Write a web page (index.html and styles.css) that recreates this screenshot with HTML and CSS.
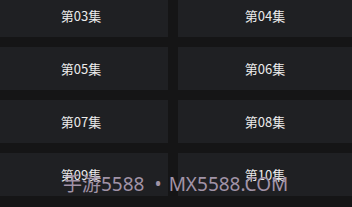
FILE: index.html
```html
<!DOCTYPE html>
<html lang="zh-CN">

<head>
    <meta charset="UTF-8">
    <meta name="viewport" content="width=device-width, initial-scale=1.0">
    <title>选集</title>
    <link rel="stylesheet" href="styles.css">
</head>

<body>
    <section class="episodes">
        <div class="episode">第03集</div>
        <div class="episode">第04集</div>
        <div class="episode">第05集</div>
        <div class="episode">第06集</div>
        <div class="episode">第07集</div>
        <div class="episode">第08集</div>
        <div class="episode">第09集</div>
        <div class="episode">第10集</div>
    </section>
    <div class="watermark">手游5588<span class="dot">•</span>MX5588.COM</div> <!-- Overlay -->
</body>

</html>
```

FILE: styles.css
```css
* {
    box-sizing: border-box;
}

body {
    margin: 0;
    padding: 0;
    width: 352px;
    height: 207px;
    overflow: hidden;
    position: relative;
    background-color: #151516;
    font-family: "Noto Sans CJK SC", "Noto Sans", sans-serif;
}

/* Episode grid */
.episodes {
    display: grid;
    grid-template-columns: 174px 174px;
    gap: 10px;
    margin: -6px 0 0 -6px;
}

.episode {
    height: 43px;
    display: flex;
    align-items: center;
    justify-content: center;
    background-color: #1f2023;
    color: #ececec;
    font-size: 13px;
}

/* Watermark */
.watermark {
    position: absolute;
    left: 63px;
    top: 174px;
    font-family: "Noto Sans", "Noto Sans CJK SC", sans-serif;
    font-size: 19px;
    line-height: 20px;
    color: #a193a7;
    white-space: nowrap;
}

.dot {
    margin: 0 7px 0 10px;
}
```
